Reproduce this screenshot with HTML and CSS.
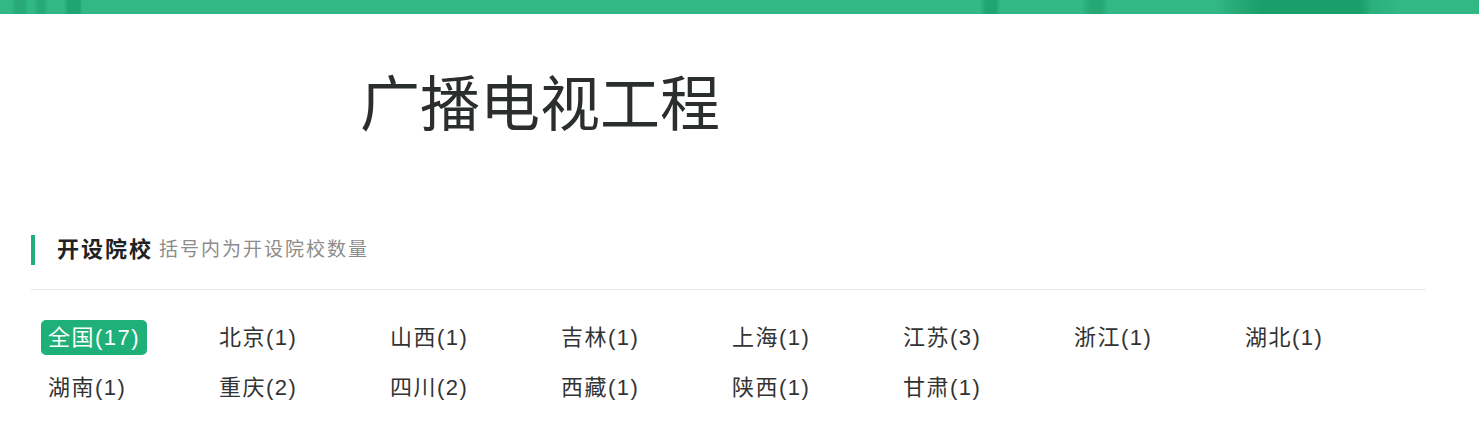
FILE: index.html
```html
<!DOCTYPE html>
<html lang="zh-CN">
<head>
<meta charset="utf-8">
<title>广播电视工程</title>
<link rel="stylesheet" href="styles.css">
</head>
<body>
<div class="topbar"></div>
<div class="hero">
  <h1 class="title">广播电视工程</h1>
</div>
<div class="section">
  <div class="section-head">
    <span class="head-main">开设院校</span><span class="head-sub">括号内为开设院校数量</span>
  </div>
  <div class="regions">
    <span class="region active">全国(17)</span>
    <span class="region">北京(1)</span>
    <span class="region">山西(1)</span>
    <span class="region">吉林(1)</span>
    <span class="region">上海(1)</span>
    <span class="region">江苏(3)</span>
    <span class="region">浙江(1)</span>
    <span class="region">湖北(1)</span>
    <span class="region">湖南(1)</span>
    <span class="region">重庆(2)</span>
    <span class="region">四川(2)</span>
    <span class="region">西藏(1)</span>
    <span class="region">陕西(1)</span>
    <span class="region">甘肃(1)</span>
  </div>
</div>
</body>
</html>
```

FILE: styles.css
```css
html, body {
  margin: 0;
  padding: 0;
  background: #ffffff;
}
body {
  font-family: "Liberation Sans", "Noto Sans CJK SC", sans-serif;
  color: #333333;
}
.topbar {
  height: 14px;
  background:
    linear-gradient(90deg,
      #31b884 0, #31b884 12px, #27aa77 16px, #27aa77 24px, #31b884 28px,
      #31b884 34px, #27aa77 38px, #27aa77 44px, #31b884 48px,
      #31b884 64px, #1fa571 68px, #1fa571 80px, #31b884 82px,
      #31b884 980px, #1fa571 986px, #1fa571 996px, #31b884 1000px,
      #31b884 1082px, #25a874 1090px, #25a874 1102px, #31b884 1108px,
      #31b884 1215px, #28ab78 1235px, #1a9f6b 1262px, #1a9f6b 1360px, #2bb07d 1372px,
      #31b884 1400px, #31b884 100%);
}
.hero {
  padding: 41px 0 0 360px;
}
.title {
  margin: 0;
  font-size: 60px;
  line-height: 90px;
  font-weight: 400;
  color: #2a2e2c;
  font-family: "Noto Sans CJK SC", "Liberation Sans", sans-serif;
}
.section {
  margin: 90px 53px 0 31px;
}
.section-head {
  height: 30px;
  line-height: 30px;
  border-left: 4px solid #1fb07a;
  padding-left: 22px;
  display: flex;
  align-items: center;
  gap: 6px;
}
.head-main {
  font-size: 22px;
  font-weight: 700;
  color: #222222;
  letter-spacing: 2px;
}
.head-sub {
  font-size: 19px;
  color: #8c8c8c;
  letter-spacing: 2px;
}
.regions {
  margin-top: 24px;
  border-top: 1px solid #e5e7eb;
  padding: 30px 0 0 10px;
  display: grid;
  grid-template-columns: repeat(8, 171px);
  row-gap: 15px;
  justify-items: start;
}
.region {
  height: 35px;
  line-height: 35px;
  padding: 0 7px;
  font-size: 22px;
  letter-spacing: 1.5px;
  color: #333333;
  border-radius: 5px;
  white-space: nowrap;
}
.region.active {
  padding: 0 7px;
  background: #1fb079;
  color: #ffffff;
}
```
